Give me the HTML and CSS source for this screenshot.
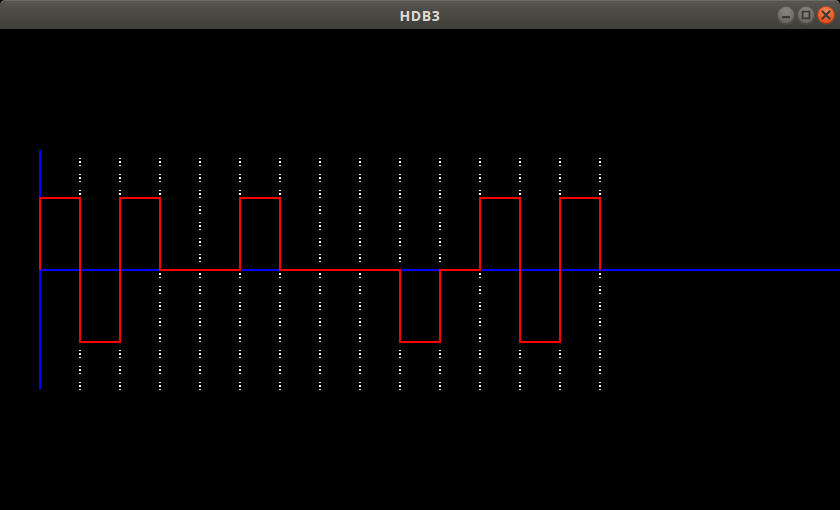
FILE: index.html
```html
<!DOCTYPE html>
<html>
<head>
<meta charset="utf-8">
<title>HDB3</title>
<link rel="stylesheet" href="styles.css">
</head>
<body>
<div class="window">
  <header class="titlebar">
    <div class="spacer"></div>
    <div class="title">HDB3</div>
    <div class="controls">
      <span class="btn btn-min"><svg width="18" height="18" viewBox="0 0 18 18"><rect x="5" y="10" width="8" height="2.2" fill="#3c3b37"/></svg></span>
      <span class="btn btn-max"><svg width="18" height="18" viewBox="0 0 18 18"><rect x="5.6" y="5.6" width="6.8" height="6.8" fill="none" stroke="#3c3b37" stroke-width="1.8"/></svg></span>
      <span class="btn btn-close"><svg width="18" height="18" viewBox="0 0 18 18"><path d="M5.5 5.5 L12.5 12.5 M12.5 5.5 L5.5 12.5" stroke="#3c3b37" stroke-width="2.2" stroke-linecap="round"/></svg></span>
    </div>
  </header>
  <main class="canvas">
    <svg class="plot" width="840" height="481" viewBox="0 29 840 481">
      <g class="grid" stroke="#ffffff" stroke-width="2" stroke-dasharray="1 2 2 2 1 8">
        <line x1="80" y1="158" x2="80" y2="390"/>
        <line x1="120" y1="158" x2="120" y2="390"/>
        <line x1="160" y1="158" x2="160" y2="390"/>
        <line x1="200" y1="158" x2="200" y2="390"/>
        <line x1="240" y1="158" x2="240" y2="390"/>
        <line x1="280" y1="158" x2="280" y2="390"/>
        <line x1="320" y1="158" x2="320" y2="390"/>
        <line x1="360" y1="158" x2="360" y2="390"/>
        <line x1="400" y1="158" x2="400" y2="390"/>
        <line x1="440" y1="158" x2="440" y2="390"/>
        <line x1="480" y1="158" x2="480" y2="390"/>
        <line x1="520" y1="158" x2="520" y2="390"/>
        <line x1="560" y1="158" x2="560" y2="390"/>
        <line x1="600" y1="158" x2="600" y2="390"/>
      </g>
      <g class="axes" stroke="#0000ff" stroke-width="2">
        <line x1="40" y1="150" x2="40" y2="389"/>
        <line x1="40" y1="270" x2="840" y2="270"/>
      </g>
      <polyline class="signal" fill="none" stroke="#ff0000" stroke-width="2"
        points="40,270 40,198 80,198 80,342 120,342 120,198 160,198 160,270 240,270 240,198 280,198 280,270 400,270 400,342 440,342 440,270 480,270 480,198 520,198 520,342 560,342 560,198 600,198 600,270"/>
    </svg>
  </main>
</div>
</body>
</html>
```
FILE: styles.css
```css
html, body {
  margin: 0;
  padding: 0;
  background: #000;
}
.window {
  width: 840px;
  height: 510px;
  display: flex;
  flex-direction: column;
  background: #000;
  overflow: hidden;
}
.titlebar {
  height: 29px;
  flex: 0 0 29px;
  display: grid;
  grid-template-columns: 1fr auto 1fr;
  align-items: center;
  background: linear-gradient(#5a5751 0%, #4c4a45 40%, #3f3e3a 100%);
  border-radius: 5px 5px 0 0;
  box-shadow: inset 0 1px 0 rgba(255,255,255,0.12);
}
.title {
  font-family: "Open Sans", "DejaVu Sans", sans-serif;
  font-weight: 700;
  font-size: 14px;
  color: #dfdbd2;
  letter-spacing: 0.6px;
  padding-top: 1px;
}
.controls {
  justify-self: end;
  display: flex;
  gap: 2px;
  padding-right: 5px;
}
.btn {
  width: 18px;
  height: 18px;
  border-radius: 50%;
  display: flex;
  box-shadow: 0 1px 0 rgba(255,255,255,0.08), inset 0 0 0 1px rgba(0,0,0,0.25);
}
.btn-min, .btn-max {
  background: radial-gradient(circle at 50% 30%, #8a8882 0%, #6f6d68 55%, #5a5854 100%);
}
.btn-close {
  background: radial-gradient(circle at 50% 30%, #f58a5c 0%, #e9541f 60%, #c9420f 100%);
}
.canvas {
  flex: 1;
  background: #000;
}
.plot {
  display: block;
  shape-rendering: crispEdges;
}
```
